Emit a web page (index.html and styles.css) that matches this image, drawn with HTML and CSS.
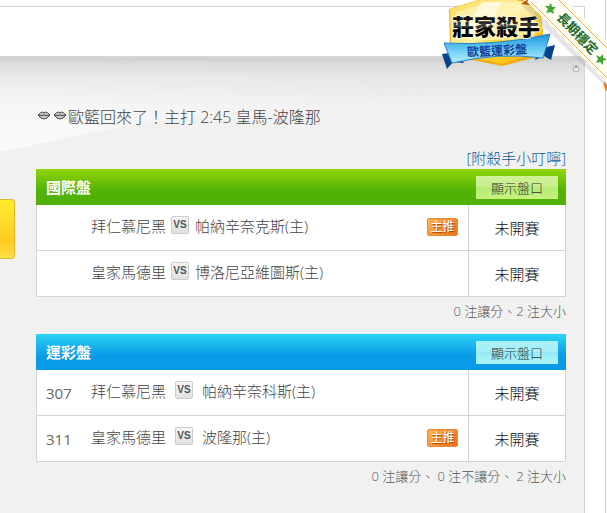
FILE: index.html
```
<!DOCTYPE html>
<html lang="zh-Hant">
<head>
    <meta charset="UTF-8">
    <meta name="viewport" content="width=device-width, initial-scale=1.0">
    <title>莊家殺手</title>
    <link rel="stylesheet" href="styles.css">
</head>
<body>
    <div class="page">
        <button class="side-tab" type="button" aria-label="展開"></button>
        <div class="card">
            <div class="card-top"></div>
            <div class="content">
                <svg class="wave" viewBox="0 0 584 100" preserveAspectRatio="none" aria-hidden="true">
                    <defs>
                        <linearGradient id="waveFill" x1="0" y1="0" x2="0" y2="1">
                            <stop offset="0" stop-color="#fff" stop-opacity="0"/>
                            <stop offset="0.4" stop-color="#fff" stop-opacity="0.3"/>
                            <stop offset="1" stop-color="#fff" stop-opacity="0.7"/>
                        </linearGradient>
                        <linearGradient id="waveFade">
                            <stop offset="0.1" stop-color="#fff"/>
                            <stop offset="0.75" stop-color="#000"/>
                        </linearGradient>
                        <mask id="waveMask"><rect width="584" height="100" fill="url(#waveFade)"/></mask>
                    </defs>
                    <path d="M0 0H584V90C480 80 300 56 200 62C130 66 60 84 0 96Z" fill="url(#waveFill)" mask="url(#waveMask)"/>
                </svg>

                <div class="headline">
                    <svg class="lips" viewBox="0 0 16 16" aria-hidden="true"><path d="M2 7Q5 4 6.500 4L8 5L9.500 4Q11 4 14 7Q11 11 8 11Q5 11 2 7Z"/><path d="M2 7Q5 8 8 7Q11 8 14 7"/></svg>
                    <svg class="lips" viewBox="0 0 16 16" aria-hidden="true"><path d="M2 7Q5 4 6.500 4L8 5L9.500 4Q11 4 14 7Q11 11 8 11Q5 11 2 7Z"/><path d="M2 7Q5 8 8 7Q11 8 14 7"/></svg>
                    <span>歐籃回來了！主打 2:45 皇馬-波隆那</span>
                </div>
                <div class="note"><a href="#">[附殺手小叮嚀]</a></div>

                <section class="board green">
                    <div class="board-head">
                        <h2>國際盤</h2>
                        <button type="button">顯示盤口</button>
                    </div>
                    <table>
                        <tr>
                            <td class="num"></td>
                            <td>拜仁慕尼黑<span class="vs">VS</span>帕納辛奈克斯(主)</td>
                            <td class="tag"><span class="main-pick">主推</span></td>
                            <td class="status">未開賽</td>
                        </tr>
                        <tr>
                            <td class="num"></td>
                            <td>皇家馬德里<span class="vs">VS</span>博洛尼亞維圖斯(主)</td>
                            <td class="tag"></td>
                            <td class="status">未開賽</td>
                        </tr>
                    </table>
                    <p class="total"><span>0 注讓分、2 注大小</span></p>
                </section>

                <section class="board blue">
                    <div class="board-head">
                        <h2>運彩盤</h2>
                        <button type="button">顯示盤口</button>
                    </div>
                    <table>
                        <tr>
                            <td class="num">307</td>
                            <td>拜仁慕尼黑<span class="vs">VS</span>帕納辛奈科斯(主)</td>
                            <td class="tag"></td>
                            <td class="status">未開賽</td>
                        </tr>
                        <tr>
                            <td class="num">311</td>
                            <td>皇家馬德里<span class="vs">VS</span>波隆那(主)</td>
                            <td class="tag"><span class="main-pick">主推</span></td>
                            <td class="status">未開賽</td>
                        </tr>
                    </table>
                    <p class="total"><span>0 注讓分、</span><span>0 注不讓分、</span><span>2 注大小</span></p>
                </section>
            </div>
        </div>

        <!-- killer badge and corner ribbon -->
        <svg class="medal" width="177" height="92" viewBox="0 0 177 92" role="img" aria-label="莊家殺手 歐籃運彩盤 長期穩定">
            <defs>
                <linearGradient id="gold" x1="0" y1="0" x2="1" y2="1">
                    <stop offset="0" stop-color="#f9dc55"/>
                    <stop offset="0.45" stop-color="#fff0a0"/>
                    <stop offset="0.6" stop-color="#ffd52a"/>
                    <stop offset="1" stop-color="#f5ae12"/>
                </linearGradient>
                <linearGradient id="band" x1="0" y1="0" x2="0" y2="1">
                    <stop offset="0" stop-color="#1e8fdd"/>
                    <stop offset="0.45" stop-color="#5cc4f3"/>
                    <stop offset="1" stop-color="#bdefff"/>
                </linearGradient>
                <linearGradient id="ink" x1="0" y1="0" x2="0" y2="1">
                    <stop offset="0.3" stop-color="#111"/>
                    <stop offset="0.5" stop-color="#444"/>
                    <stop offset="0.6" stop-color="#000"/>
                </linearGradient>
            </defs>
            <path d="M12 54L27 52L34 63L23 62L17 69Z" fill="#08448e"/>
            <path d="M108 49L125 45L121 60L114 56L105 60Z" fill="#08448e"/>
            <path d="M19 9L48 0L70 -6L110 5L114 42L107 57L72 66L37 59L20 45Z" fill="#f0ac13"/>
            <path d="M20 9L49 0L70 -4L110 6L113 40L107 53L72 64L37 56L21 42Z" fill="url(#gold)"/>
            <path d="M26 12L58 2H82L105 10V40H26Z" fill="#fff6c4" opacity="0.6"/>
            <path d="M52 2L72 2L51 38H28Z" fill="#fff" opacity="0.6"/>
            <path d="M14 43Q68 46 120 34L113 58Q68 52 22 63Z" fill="url(#band)" stroke="#2383ca"/>
            <text class="medal-name" x="22" y="35">莊家殺手</text>
            <text class="medal-type" x="37" y="55" transform="rotate(-3 68 50)">歐籃運彩盤</text>
            <path d="M91 4L97 0H106L111 7Z" fill="#b75713"/>
            <path d="M91 5L110 8L177 75V88Z" fill="#999" opacity="0.25"/>
            <path d="M97 2L101 -4H132L180 44V86Z" fill="#fffdf4"/>
            <path d="M101 2L180 81M125 -4L180 51" fill="none" stroke="#e9b13d"/>
            <path d="M173 82L180 87V95L175 89Z" fill="#e57c20"/>
            <path d="M121 3L122 7L126 7L123 10L124 14L120 12L116 13L118 9L115 6L119 6Z" fill="#3fa535"/>
            <path d="M173 54L173 58L177 59L173 61L173 65L170 62L166 63L168 59L166 55L170 57Z" fill="#3fa535"/>
            <text class="ribbon-text" x="126" y="18" transform="rotate(46 126 18)">長期穩定</text>
        </svg>
        <svg class="pin" width="8" height="8" viewBox="0 0 8 8" aria-hidden="true"><circle cx="4" cy="4" r="3" fill="#eee" stroke="#aaa"/><path d="M4 0V4" stroke="#888"/></svg>
    </div>
</body>
</html>
```
FILE: styles.css
```
* {
    box-sizing: border-box;
}
body {
    margin: 0;
    overflow-x: hidden;
    background: #fff;
    color: #444;
    font-family: "Open Sans", "Noto Sans CJK TC", sans-serif;
    font-size: 15px;
    font-weight: 300;
}
.page {
    position: relative;
    min-height: 100vh;
    margin-right: 1px;
    padding: 6px 20px 0 0;
    border-right: 1px solid #d4d4d4;
}
.card {
    min-height: calc(100vh - 6px);
    border-top: 1px solid #d4d4d4;
    border-right: 1px solid #d4d4d4;
    background: #f1f1f1;
}
.card-top {
    height: 49px;
    background: #fff;
}
.content {
    position: relative;
    padding: 47px 18px 0 36px;
    background: linear-gradient(#d8d8d8 0, #cecece 3px, #dadada 7px, #e6e6e6 20px, #f1f1f1 50px);
}
.wave {
    position: absolute;
    top: 0;
    left: 0;
    width: 100%;
    height: 100px;
}
.headline {
    position: relative;
    display: flex;
    align-items: center;
    height: 26px;
    font-size: 16px;
    white-space: nowrap;
}
.lips {
    width: 16px;
    height: 16px;
    fill: #ccc;
    stroke: #444;
}
.note {
    position: relative;
    padding-top: 19px;
    line-height: 21px;
    text-align: right;
}
.note a {
    color: #0b5a94;
    text-decoration: none;
}
.board-head {
    display: flex;
    justify-content: space-between;
    align-items: center;
    height: 36px;
    padding: 0 8px 0 10px;
    color: #fff;
}
.green .board-head {
    background: linear-gradient(#93d509, #52b105 60%, #52b105);
}
.blue .board-head {
    background: linear-gradient(#2bd4f5, #0a9be6 60%, #0a9be6);
}
.board-head h2 {
    margin: 0;
    font-size: 15px;
    font-weight: 700;
    line-height: 20px;
}
.board-head button {
    width: 82px;
    height: 23px;
    padding: 0;
    border: 0;
    color: #333;
    font-family: inherit;
    font-size: 13px;
    font-weight: 300;
    cursor: pointer;
}
.green .board-head button {
    background: linear-gradient(#d0f195, #c6ee8c 50%, #b5ea74 50%, #c8f27f);
}
.blue .board-head button {
    background: linear-gradient(#aaf2fb, #a4effa 50%, #94e9f8 50%, #adf7fb);
}
table {
    width: 100%;
    border: 1px solid #d4d4d4;
    border-top: 0;
    border-spacing: 0;
    background: #fff;
}
td {
    height: 45px;
    padding: 0;
    line-height: 20px;
    white-space: nowrap;
}
tr + tr td {
    height: 46px;
    border-top: 1px solid #d4d4d4;
}
.num {
    width: 54px;
    padding-left: 9px;
    color: #666;
    font-weight: 400;
}
.tag {
    width: 42px;
    padding-right: 10px;
    text-align: right;
}
.status {
    width: 97px;
    border-left: 1px solid #d4d4d4;
    color: #111;
    text-align: center;
}
.vs {
    display: inline-block;
    width: 18px;
    height: 18px;
    margin: 0 6px 5px 5px;
    border: 1px solid #ccc;
    border-radius: 2px;
    background: linear-gradient(#f5f5f5, #e0e0e0);
    color: #555;
    font: 700 10px/16px "Liberation Sans", sans-serif;
    text-align: center;
    vertical-align: middle;
}
.blue .vs {
    margin: 0 9px 5px;
}
.main-pick {
    display: inline-block;
    width: 31px;
    height: 18px;
    margin-bottom: 3px;
    border: 1px solid #e8883a;
    border-radius: 2px;
    background: linear-gradient(135deg, #ffb350, #f0701a);
    color: #fff;
    font-size: 12px;
    font-weight: 400;
    line-height: 16px;
    text-align: center;
    text-shadow: 1px 1px 1px #a04400;
    vertical-align: middle;
}
.total {
    display: flex;
    justify-content: flex-end;
    gap: 3px;
    margin: 4px 0 12px;
    color: #555;
    font-size: 13px;
    line-height: 21px;
}
.side-tab {
    position: absolute;
    top: 199px;
    left: 0;
    z-index: 1;
    width: 15px;
    height: 60px;
    padding: 0;
    border: 1px solid #dfb52c;
    border-left: 0;
    border-radius: 0 4px 4px 0;
    background: linear-gradient(#ffee2c, #ffd527 50%, #ffc91d 70%, #ffdf4a);
}
.medal {
    position: absolute;
    top: 0;
    right: -2px;
}
.medal-name {
    fill: url(#ink);
    stroke: #fff8d0;
    stroke-width: 2px;
    paint-order: stroke;
    font-size: 22px;
    font-weight: 900;
}
.medal-type {
    fill: #123f94;
    font-size: 12px;
    font-weight: 700;
}
.ribbon-text {
    fill: #1b6b28;
    font-size: 13px;
    font-weight: 700;
}
.pin {
    position: absolute;
    top: 65px;
    right: 25px;
}
```
